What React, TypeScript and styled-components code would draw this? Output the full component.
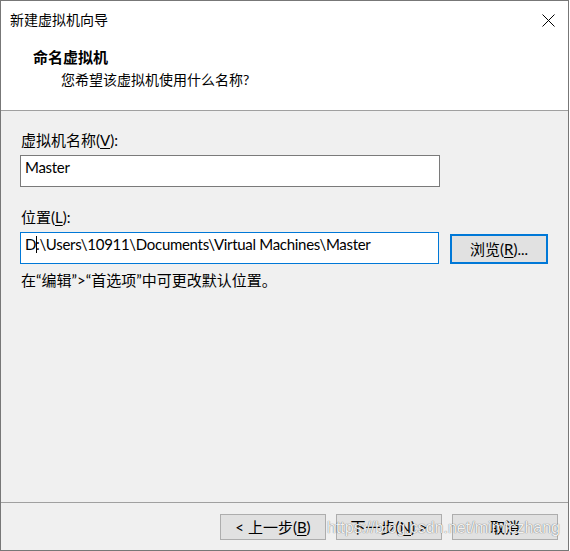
import React from "react";
import styled, { createGlobalStyle } from "styled-components";

const GlobalStyle = createGlobalStyle`
  html, body { margin: 0; padding: 0; background: #ffffff; }
  * { box-sizing: border-box; }
`;

const FONT = `Lato, "Noto Sans CJK SC", sans-serif`;

const Window = styled.div`
  position: relative;
  width: 569px;
  height: 551px;
  border: 1px solid #777777;
  background: #f0f0f0;
  display: flex;
  flex-direction: column;
  font-family: ${FONT};
  color: #000;
  overflow: hidden;
`;

const TitleBar = styled.div`
  height: 38px;
  background: #ffffff;
  display: flex;
  align-items: center;
  justify-content: space-between;
  padding-left: 9px;
  padding-right: 13px;
`;

const TitleText = styled.span`
  font-size: 14px;
  line-height: 20px;
`;

const CloseIcon = styled.svg`
  width: 13px;
  height: 13px;
  display: block;
`;

const Header = styled.div`
  height: 72px;
  background: #ffffff;
  border-bottom: 1px solid #a0a0a0;
  padding-top: 8px;
  display: flex;
  flex-direction: column;
  gap: 3px;
`;

const HeaderTitle = styled.div`
  font-size: 15px;
  line-height: 20px;
  font-weight: 700;
  padding-left: 32px;
`;

const HeaderSub = styled.div`
  font-size: 14px;
  line-height: 20px;
  padding-left: 60px;
`;

const Body = styled.div`
  flex: 1;
  padding: 19px 20px 0 19px;
  display: flex;
  flex-direction: column;
`;

const Label = styled.div<{ $top?: number }>`
  font-size: 15px;
  line-height: 20px;
  padding-left: 1px;
  margin-top: ${(p) => p.$top ?? 0}px;
  margin-bottom: 5px;
`;

const U = styled.span`
  text-decoration: underline;
  text-underline-offset: 2px;
`;

const FieldRow = styled.div`
  display: flex;
  align-items: center;
  gap: 11px;
`;

const TextBox = styled.div<{ $focused?: boolean }>`
  width: 420px;
  height: 32px;
  background: #ffffff;
  border: 1px solid ${(p) => (p.$focused ? "#0078d7" : "#7a7a7a")};
  padding: 1px 4px 0 4px;
  font-size: 15px;
  line-height: 20px;
  letter-spacing: -0.3px;
  white-space: nowrap;
  overflow: hidden;
`;

const Caret = styled.span`
  display: inline-block;
  width: 1px;
  height: 17px;
  background: #000;
  vertical-align: -3px;
  margin-right: -1px;
`;

const BrowseButton = styled.button`
  width: 98px;
  height: 30px;
  background: #e1e1e1;
  border: 2px solid #0078d7;
  font-family: ${FONT};
  font-size: 15px;
  line-height: 20px;
  color: #000;
  padding: 0;
  margin-top: 1px;
`;

const Hint = styled.div`
  font-size: 15px;
  line-height: 20px;
  margin-top: 6px;
  padding-left: 1px;
`;

const Footer = styled.div`
  border-top: 1px solid #a0a0a0;
  padding: 11px 10px 10px 0;
  display: flex;
  justify-content: flex-end;
  gap: 10px;
`;

const Button = styled.button`
  width: 106px;
  height: 26px;
  background: #e1e1e1;
  border: 1px solid #adadad;
  font-family: ${FONT};
  font-size: 15px;
  line-height: 20px;
  color: #000;
  padding: 0 0 1px 0;
`;

const Watermark = styled.div`
  position: absolute;
  left: 326px;
  top: 517px;
  font-family: "Liberation Sans", Arial, sans-serif;
  font-size: 16px;
  line-height: 20px;
  color: rgba(255, 255, 255, 0.92);
  text-shadow: 0 0 1px rgba(0, 0, 0, 0.45), 0 0 1px rgba(0, 0, 0, 0.3);
  pointer-events: none;
  white-space: nowrap;
`;

export default function App() {
  return (
    <>
      <GlobalStyle />
      <Window>
        <TitleBar>
          <TitleText>新建虚拟机向导</TitleText>
          <CloseIcon viewBox="0 0 13 13">
            <path d="M0.5 0.5 L12.5 12.5 M12.5 0.5 L0.5 12.5" stroke="#000" strokeWidth="1" fill="none" />
          </CloseIcon>
        </TitleBar>
        <Header>
          <HeaderTitle>命名虚拟机</HeaderTitle>
          <HeaderSub>您希望该虚拟机使用什么名称?</HeaderSub>
        </Header>
        <Body>
          <Label>
            虚拟机名称(<U>V</U>):
          </Label>
          <TextBox>Master</TextBox>
          <Label $top={20}>
            位置(<U>L</U>):
          </Label>
          <FieldRow>
            <TextBox $focused>
              D<Caret />:\Users\10911\Documents\Virtual Machines\Master
            </TextBox>
            <BrowseButton>
              浏览(<U>R</U>)...
            </BrowseButton>
          </FieldRow>
          <Hint>在“编辑”&gt;“首选项”中可更改默认位置。</Hint>
        </Body>
        <Footer>
          <Button>
            &lt; 上一步(<U>B</U>)
          </Button>
          <Button>
            下一步(<U>N</U>) &gt;
          </Button>
          <Button>取消</Button>
        </Footer>
        <Watermark>https://blog.csdn.net/mimiczhang</Watermark>
      </Window>
    </>
  );
}
